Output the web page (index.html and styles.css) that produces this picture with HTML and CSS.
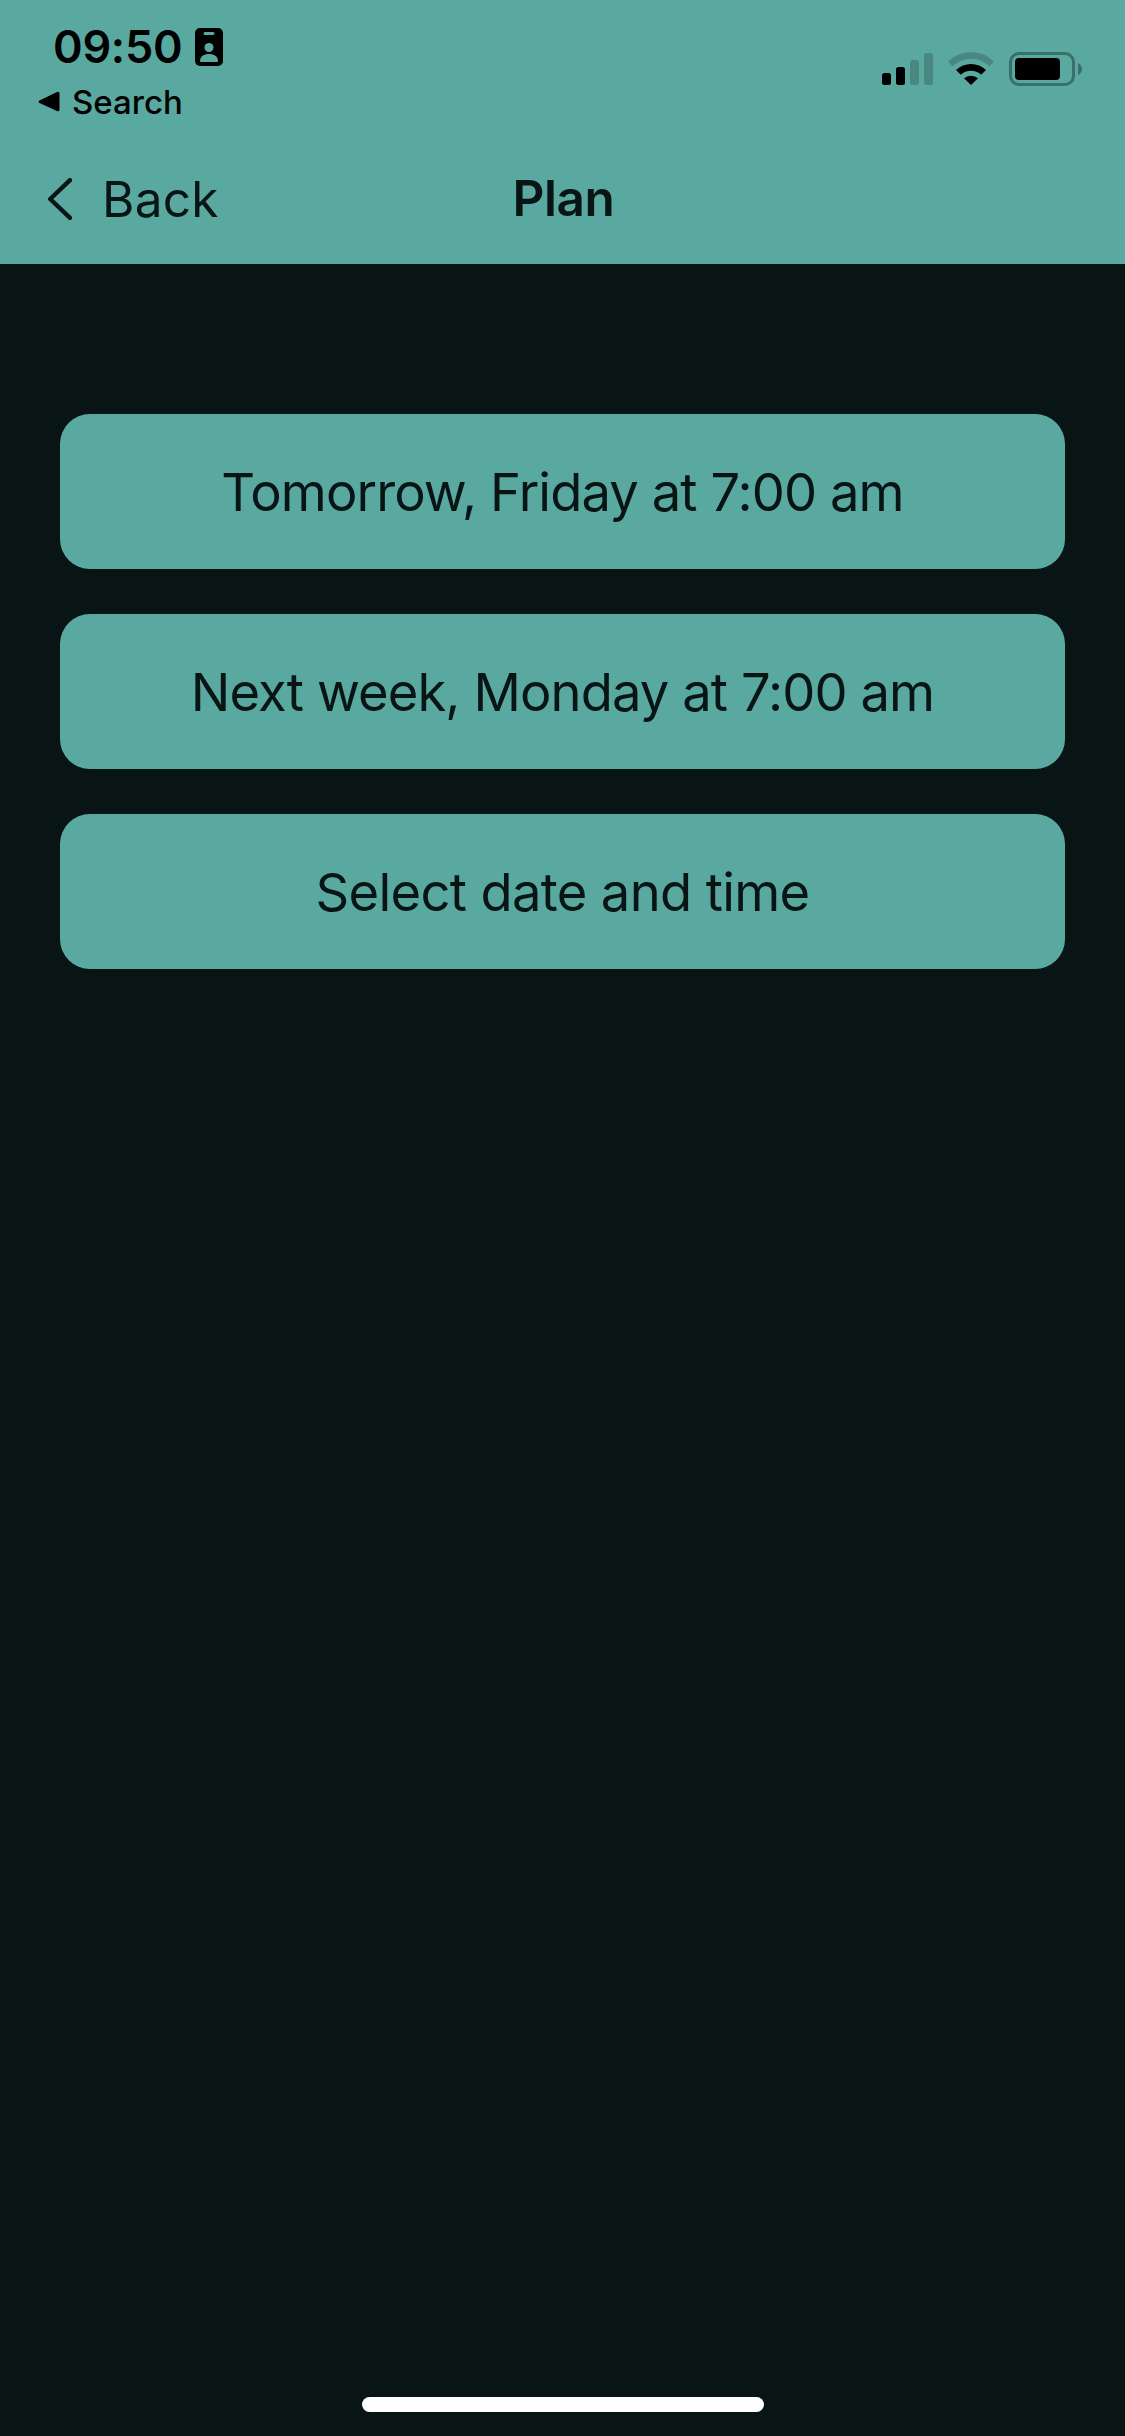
FILE: index.html
```html
<!DOCTYPE html>
<html lang="en">
<head>
<meta charset="utf-8">
<title>Plan</title>
<link rel="stylesheet" href="styles.css">
</head>
<body>
<header class="header">
  <div class="status">
    <div class="status-left">
      <div class="clock"><span class="time">09:50</span>
        <svg width="28" height="38" viewBox="0 0 28 38"><rect width="28" height="38" rx="5"/><rect class="cut" x="8.5" y="4" width="11" height="3" rx="1.5"/><circle class="cut" cx="14" cy="19.5" r="4.5"/><path class="cut" d="M5 33C5 28.500 9 26 14 26S23 28.500 23 33Q23 34 22 34H6Q5 34 5 33Z"/></svg>
      </div>
      <div class="return"><svg width="22" height="22" viewBox="0 0 22 22"><path d="M1.500 9.500 19 1Q21.500 0 21.500 2.500V18.500Q21.500 21 19 20L1.500 12Q-.5 10.700 1.500 9.500Z"/></svg><span class="search">Search</span></div>
    </div>
    <div class="status-right">
      <svg width="216" height="40" viewBox="0 0 216 40">
        <rect x="2" y="23" width="9" height="12" rx="2.500"/><rect x="16" y="17" width="9" height="18" rx="2.500"/>
        <g class="dim"><rect x="30" y="10" width="9" height="25" rx="2.500"/><rect x="44" y="3" width="9" height="32" rx="2.500"/>
        <path d="M68 11.500A33 33 0 0 1 114 11.500L109.500 16.300A26.500 26.500 0 0 0 72.500 16.300Z"/></g>
        <path d="M76 20A21.500 21.500 0 0 1 106 20L101.200 24.800A14.800 14.800 0 0 0 80.800 24.800Z"/>
        <path d="M84 28.300A10.500 10.500 0 0 1 98 28.300L91 35Z"/>
        <rect class="shell" x="130.500" y="3.500" width="63" height="31" rx="8.500"/>
        <rect x="135" y="8" width="45" height="22" rx="4"/>
        <path class="tip" d="M198 13Q202 15 202 19T198 25Z"/>
      </svg>
    </div>
  </div>
  <nav class="nav">
    <a class="back"><svg width="24" height="42" viewBox="0 0 24 42"><path d="M22 2.200 2.200 21 22 39.800"/></svg><span class="back-label">Back</span></a>
    <h1 class="title">Plan</h1>
  </nav>
</header>
<main class="options">
  <button class="option">Tomorrow, Friday at 7:00 am</button>
  <button class="option">Next week, Monday at 7:00 am</button>
  <button class="option option-short">Select date and time</button>
</main>
<footer class="home"><div class="indicator"></div></footer>
</body>
</html>
```
FILE: styles.css
```css
* { box-sizing: border-box; }
body {
  margin: 0;
  height: 2436px;
  display: flex;
  flex-direction: column;
  background: #091515;
  color: #091515;
  font-family: Inter, "Liberation Sans", sans-serif;
}
svg { display: block; flex: none; }
.header { height: 264px; background: #5aa9a0; }
.status { height: 134px; display: flex; justify-content: space-between; color: #000; }
.status-left { padding: 20px 0 0 38px; }
.clock { display: flex; align-items: center; gap: 13px; height: 54px; padding-left: 15px; }
.time { font-size: 45px; font-weight: 600; line-height: 54px; letter-spacing: -0.3px; }
.cut { fill: #5aa9a0; }
.return { display: flex; align-items: center; gap: 12px; height: 40px; margin-top: 8px; }
.search { font-size: 33px; font-weight: 500; line-height: 40px; }
.status-right { padding: 50px 29px 0 0; }
.dim { fill: #488880; }
.shell { fill: none; stroke: #397069; stroke-width: 3px; }
.tip { fill: #397069; }
.nav { height: 130px; display: grid; grid-template-columns: 1fr auto 1fr; align-items: center; }
.back { display: flex; align-items: center; gap: 30px; padding-left: 48px; }
.back path { fill: none; stroke: #091515; stroke-width: 4.400px; stroke-linecap: round; stroke-linejoin: round; }
.back-label { font-size: 49.500px; line-height: 60px; letter-spacing: 0.25px; padding-bottom: 1px; }
.title { margin: 0; padding: 0 0 3px 2px; font-size: 49.500px; font-weight: 600; line-height: 60px; letter-spacing: -0.4px; }
.options { flex: 1; display: flex; flex-direction: column; gap: 45px; padding: 150px 60px 0; }
.option {
  height: 155px;
  padding: 0;
  border: 0;
  border-radius: 30px;
  background: #5aa9a0;
  color: inherit;
  font: 400 52.500px/64px Inter, "Liberation Sans", sans-serif;
  letter-spacing: -0.9px;
}
.option-short { letter-spacing: -0.65px; }
.home { height: 39px; display: flex; justify-content: center; }
.indicator { width: 402px; height: 15px; border-radius: 8px; background: #fff; }
```
